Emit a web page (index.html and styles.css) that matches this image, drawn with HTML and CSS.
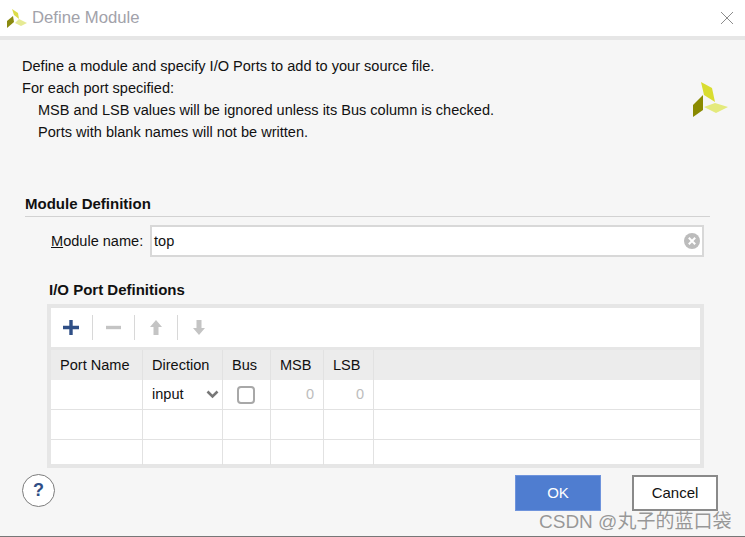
FILE: index.html
```html
<!DOCTYPE html>
<html lang="en">
<head>
<meta charset="utf-8">
<title>Define Module</title>
<link rel="stylesheet" href="styles.css">
</head>
<body>
<div class="dialog">
  <header class="titlebar">
    <svg class="logo-small" width="21" height="21" viewBox="7 6 21 21"><polygon points="12,7 18,11 19,17 14,13" fill="#dcdc48"/><polygon points="15,21 19,17 27,21 21,24" fill="#e6ea94"/><polygon points="7,19 13,14 14,20 7,26" fill="#8a8a10"/></svg>
    <span class="title">Define Module</span>
    <svg class="close" width="14" height="14" viewBox="0 0 14 14"><path d="M1 1L13 13M13 1L1 13" stroke="#8c8c8c" stroke-width="1" fill="none"/></svg>
  </header>
  <section class="intro">
    <div class="intro-text">
      <p>Define a module and specify I/O Ports to add to your source file.</p>
      <p>For each port specified:</p>
      <p class="indent">MSB and LSB values will be ignored unless its Bus column is checked.</p>
      <p class="indent">Ports with blank names will not be written.</p>
    </div>
    <svg class="logo-large" width="36" height="36" viewBox="0 0 36 36"><polygon points="8,0 19,6 22,20 11,13" fill="#d9dd30"/><polygon points="11,25 22,21 35,25 23,31" fill="#e4ea7c"/><polygon points="0,23 10,13 10,28 0,35" fill="#8a8a00"/></svg>
  </section>
  <section class="definition">
    <h2 class="section-title">Module Definition</h2>
    <div class="name-row">
      <label class="name-label"><u>M</u>odule name:</label>
      <div class="name-input">
        <span>top</span>
        <svg width="16" height="16" viewBox="0 0 16 16"><circle cx="8" cy="8" r="8" fill="#bcbcbc"/><path d="M4.800 4.800L11.200 11.200M11.200 4.800L4.800 11.200" stroke="#fff" stroke-width="2"/></svg>
      </div>
    </div>
    <h3 class="sub-title">I/O Port Definitions</h3>
    <div class="ports">
      <div class="toolbar">
        <svg class="tool" width="16" height="15" viewBox="0 0 16 15"><path d="M8 0V15M0 7.500H16" stroke="#2f4f86" stroke-width="3.400"/></svg>
        <i class="sep"></i>
        <svg class="tool" width="15" height="15" viewBox="0 0 15 15"><path d="M0 7.500H15" stroke="#c4c4c4" stroke-width="3.400"/></svg>
        <i class="sep"></i>
        <svg class="tool arrow" width="12" height="15" viewBox="0 0 12 15"><path d="M6 0L12 7H8.500V15H3.500V7H0Z" fill="#c4c4c4"/></svg>
        <i class="sep"></i>
        <svg class="tool arrow" width="12" height="15" viewBox="0 0 12 15"><path d="M6 15L12 8H8.500V0H3.500V8H0Z" fill="#c4c4c4"/></svg>
      </div>
      <div class="grid head">
        <div>Port Name</div><div>Direction</div><div>Bus</div><div>MSB</div><div>LSB</div><div></div>
      </div>
      <div class="grid row">
        <div></div>
        <div class="direction">input<svg width="13" height="9" viewBox="0 0 13 9"><path d="M1.500 1.500L6.500 6.500L11.500 1.500" stroke="#777" stroke-width="2.600" fill="none"/></svg></div>
        <div class="center"><span class="check"></span></div>
        <div class="num">0</div><div class="num">0</div><div></div>
      </div>
      <div class="grid row"><div></div><div></div><div></div><div></div><div></div><div></div></div>
      <div class="grid row last"><div></div><div></div><div></div><div></div><div></div><div></div></div>
    </div>
  </section>
  <footer class="footer">
    <button class="help">?</button>
    <div class="actions">
      <button class="ok">OK</button>
      <button class="cancel">Cancel</button>
    </div>
  </footer>
  <div class="watermark">CSDN @丸子的蓝口袋</div>
</div>
</body>
</html>
```
FILE: styles.css
```css
* { box-sizing: border-box; }
html, body { margin: 0; padding: 0; }
body { width: 745px; height: 537px; overflow: hidden; background: #f6f6f6; font-family: "Liberation Sans", Arial, sans-serif; font-size: 14.55px; color: #111; }
.dialog { position: relative; width: 745px; height: 537px; border-bottom: 1px solid #777; }

.titlebar { height: 40px; background: #fff; border-bottom: 4px solid #e6e6e6; display: flex; align-items: center; padding: 0 10px 0 7px; }
.logo-small { flex: none; }
.title { margin-left: 4px; font-size: 16.7px; color: #a2a2aa; flex: 1; }
.close { margin-right: 1px; }

.intro { height: 156px; padding: 15px 16px 0 22px; display: flex; justify-content: space-between; }
.intro-text p { margin: 0; height: 22px; line-height: 22px; }
.intro-text .indent { padding-left: 16px; }
.logo-large { margin-top: 27px; }

.definition { padding: 0 41px 0 25px; }
.section-title { margin: 0; height: 21px; line-height: 15px; font-size: 15px; font-weight: bold; border-bottom: 1px solid #d2d2d2; width: 685px; }
.name-row { display: flex; align-items: center; margin-top: 8px; padding-left: 26px; width: 679px; }
.name-label { width: 99px; }
.name-input { flex: 1; height: 32px; background: #fff; border: 2px solid #d8d8d8; display: flex; align-items: center; justify-content: space-between; padding: 0 2px; }
.sub-title { margin: 25px 0 0 24px; height: 16px; line-height: 16px; font-size: 15px; font-weight: bold; }

.ports { margin: 6px 0 0 22px; width: 657px; height: 164px; border: 4px solid #e6e6e6; background: #fff; }
.toolbar { height: 39px; display: flex; align-items: center; padding-left: 12px; }
.tool { flex: none; }
.sep { width: 1px; height: 25px; background: #d8d8d8; margin: 0 13px; }
.arrow { margin: 0 2px; }

.grid { display: grid; grid-template-columns: 92px 80px 48px 53px 50px 1fr; }
.grid > div { border-right: 1px solid #e2e2e2; }
.grid > div:last-child { border-right: 0; }
.head { height: 33px; background: #ececec; border-top: 3px solid #e6e6e6; }
.head > div { line-height: 30px; padding-left: 9px; }
.row { height: 30px; border-bottom: 1px solid #e2e2e2; }
.row.last { height: 25px; border-bottom: 0; }
.row > div { line-height: 29px; }
.direction { display: flex; align-items: center; justify-content: space-between; padding: 0 3px 0 9px; }
.center { display: flex; align-items: center; justify-content: center; padding-right: 2px; }
.check { width: 18px; height: 18px; border: 2px solid #a8a8a8; border-radius: 4px; background: #fff; }
.num { text-align: right; padding-right: 9px; color: #bdbdbd; }

.footer { display: flex; justify-content: space-between; align-items: flex-start; padding: 7px 27px 0 22px; }
.footer button { font-family: inherit; }
.help { width: 33px; height: 33px; margin-top: -1px; border-radius: 50%; border: 1px solid #7c7c7c; background: #fff; color: #2f4f86; font-size: 18px; font-weight: bold; padding: 0; }
.actions { display: flex; gap: 31px; }
.ok, .cancel { width: 86px; height: 36px; font-size: 15px; padding: 0 0 2px; }
.ok { background: #4f7dd0; border: 1px solid #6f94dc; color: #fff; }
.cancel { background: #fff; border: 2px solid #8a8a8a; color: #111; }

.watermark { position: absolute; left: 539px; top: 506px; font-family: "Liberation Sans", "Noto Sans CJK SC", sans-serif; font-size: 19px; color: rgba(120,120,120,.75); white-space: nowrap; }
```
